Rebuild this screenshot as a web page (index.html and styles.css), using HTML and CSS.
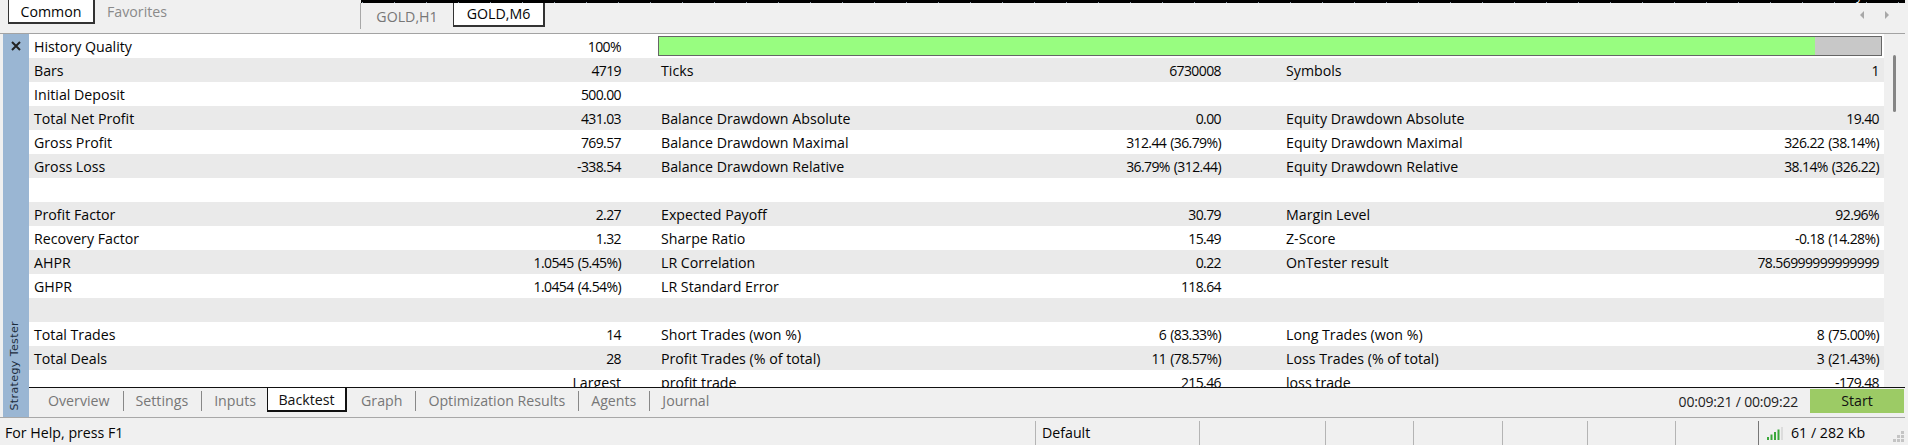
FILE: index.html
```html
<!DOCTYPE html>
<html lang="en">
<head>
    <meta charset="UTF-8">
    <title>Strategy Tester</title>
    <link rel="stylesheet" href="styles.css">
</head>
<body>

<div class="top">
    <div class="side-tabs">
        <div class="tab tab-on">Common</div>
        <div class="tab tab-off">Favorites</div>
    </div>
    <div class="chart-area">
        <div class="chart-strip"><span class="chart-label">7 days</span></div>
        <div class="chart-tabs">
            <div class="chart-tab">GOLD,H1</div>
            <div class="tab-on chart-tab-on">GOLD,M6</div>
            <div class="arrows">
                <svg width="6" height="10" viewBox="0 0 6 10"><path d="M5 1v8L1 5z" fill="#a8a8a8"/></svg>
                <svg width="6" height="10" viewBox="0 0 6 10"><path d="M1 1v8l4-4z" fill="#a8a8a8"/></svg>
            </div>
        </div>
    </div>
</div>

<div class="main">
    <div class="sidebar">
        <svg class="close" width="10" height="10" viewBox="0 0 10 10"><path d="M1 1l8 8M9 1l-8 8" stroke="#222" stroke-width="2"/></svg>
        <div class="sidebar-title">Strategy Tester</div>
    </div>
    <div class="content">
        <div class="report-wrap">
            <div class="report">
                <div class="row">
                    <div class="cell a"><span>History Quality</span><span>100%</span></div>
                    <div class="quality"><div class="quality-fill"></div></div>
                </div>
                <div class="row">
                    <div class="cell a"><span>Bars</span><span>4719</span></div>
                    <div class="cell b"><span>Ticks</span><span>6730008</span></div>
                    <div class="cell c"><span>Symbols</span><span>1</span></div>
                </div>
                <div class="row">
                    <div class="cell a"><span>Initial Deposit</span><span>500.00</span></div>
                </div>
                <div class="row">
                    <div class="cell a"><span>Total Net Profit</span><span>431.03</span></div>
                    <div class="cell b"><span>Balance Drawdown Absolute</span><span>0.00</span></div>
                    <div class="cell c"><span>Equity Drawdown Absolute</span><span>19.40</span></div>
                </div>
                <div class="row">
                    <div class="cell a"><span>Gross Profit</span><span>769.57</span></div>
                    <div class="cell b"><span>Balance Drawdown Maximal</span><span>312.44 (36.79%)</span></div>
                    <div class="cell c"><span>Equity Drawdown Maximal</span><span>326.22 (38.14%)</span></div>
                </div>
                <div class="row">
                    <div class="cell a"><span>Gross Loss</span><span>-338.54</span></div>
                    <div class="cell b"><span>Balance Drawdown Relative</span><span>36.79% (312.44)</span></div>
                    <div class="cell c"><span>Equity Drawdown Relative</span><span>38.14% (326.22)</span></div>
                </div>
                <div class="row"></div>
                <div class="row">
                    <div class="cell a"><span>Profit Factor</span><span>2.27</span></div>
                    <div class="cell b"><span>Expected Payoff</span><span>30.79</span></div>
                    <div class="cell c"><span>Margin Level</span><span>92.96%</span></div>
                </div>
                <div class="row">
                    <div class="cell a"><span>Recovery Factor</span><span>1.32</span></div>
                    <div class="cell b"><span>Sharpe Ratio</span><span>15.49</span></div>
                    <div class="cell c"><span>Z-Score</span><span>-0.18 (14.28%)</span></div>
                </div>
                <div class="row">
                    <div class="cell a"><span>AHPR</span><span>1.0545 (5.45%)</span></div>
                    <div class="cell b"><span>LR Correlation</span><span>0.22</span></div>
                    <div class="cell c"><span>OnTester result</span><span>78.56999999999999</span></div>
                </div>
                <div class="row">
                    <div class="cell a"><span>GHPR</span><span>1.0454 (4.54%)</span></div>
                    <div class="cell b"><span>LR Standard Error</span><span>118.64</span></div>
                </div>
                <div class="row"></div>
                <div class="row">
                    <div class="cell a"><span>Total Trades</span><span>14</span></div>
                    <div class="cell b"><span>Short Trades (won %)</span><span>6 (83.33%)</span></div>
                    <div class="cell c"><span>Long Trades (won %)</span><span>8 (75.00%)</span></div>
                </div>
                <div class="row">
                    <div class="cell a"><span>Total Deals</span><span>28</span></div>
                    <div class="cell b"><span>Profit Trades (% of total)</span><span>11 (78.57%)</span></div>
                    <div class="cell c"><span>Loss Trades (% of total)</span><span>3 (21.43%)</span></div>
                </div>
                <div class="row">
                    <div class="cell a end"><span>Largest</span></div>
                    <div class="cell b"><span>profit trade</span><span>215.46</span></div>
                    <div class="cell c"><span>loss trade</span><span>-179.48</span></div>
                </div>
            </div>
            <div class="scroll"><div class="thumb"></div></div>
        </div>
        <div class="bottom-tabs">
            <div class="btab sep">Overview</div>
            <div class="btab sep">Settings</div>
            <div class="btab tight">Inputs</div>
            <div class="btab-on">Backtest</div>
            <div class="btab sep">Graph</div>
            <div class="btab sep">Optimization Results</div>
            <div class="btab sep">Agents</div>
            <div class="btab">Journal</div>
            <div class="timer">00:09:21 / 00:09:22</div>
            <div class="start">Start</div>
        </div>
    </div>
</div>

<div class="status">
    <div class="status-help">For Help, press F1</div>
    <div class="status-cell w-default">Default</div>
    <div class="status-cell w1"></div>
    <div class="status-cell w2"></div>
    <div class="status-cell w3"></div>
    <div class="status-cell w4"></div>
    <div class="status-cell w5"></div>
    <div class="status-cell w6"></div>
    <div class="status-net">
        <svg width="17" height="13" viewBox="0 0 17 13">
            <rect x="0" y="10" width="2" height="3" fill="#3aa83a"/>
            <rect x="3.5" y="7.5" width="2" height="5.5" fill="#3aa83a"/>
            <rect x="7" y="5" width="2" height="8" fill="#3aa83a"/>
            <rect x="10.5" y="2.5" width="2" height="10.5" fill="#3aa83a"/>
            <rect x="14" y="0" width="2" height="13" fill="#dcdcdc"/>
        </svg>
        <span>61 / 282 Kb</span>
    </div>
    <svg class="grip" width="12" height="12" viewBox="0 0 12 12" fill="#c4c4c4">
        <rect x="8" y="0" width="3" height="3"/>
        <rect x="4" y="4" width="3" height="3"/><rect x="8" y="4" width="3" height="3"/>
        <rect x="0" y="8" width="3" height="3"/><rect x="4" y="8" width="3" height="3"/><rect x="8" y="8" width="3" height="3"/>
    </svg>
</div>

</body>
</html>
```

FILE: styles.css
```css
* {
    box-sizing: border-box;
    margin: 0;
    padding: 0;
}
html, body {
    height: 445px;
    overflow: hidden;
}
body {
    display: flex;
    flex-direction: column;
    width: 1908px;
    padding-right: 3px;
    background: #f0f0f0;
    color: #050505;
    font-family: 'Open Sans', sans-serif;
    font-size: 14.2px;
    line-height: 24px;
}

/* top strip */
.top {
    display: flex;
    height: 34px;
    flex: none;
    border-bottom: 1px solid #a3a3a3;
}
.side-tabs {
    display: flex;
    width: 360px;
    height: 24px;
    padding-left: 8px;
}
.tab {
    width: 87px;
    height: 24px;
    text-align: center;
}
.tab-on {
    background: #fff;
    border: 1px solid #333;
    border-top: none;
    border-right-width: 2px;
    border-bottom-width: 2px;
}
.tab-off {
    width: 84px;
    color: #8a8a8a;
}
.chart-area {
    flex: 1;
    min-width: 0;
}
.chart-strip {
    position: relative;
    height: 3px;
    overflow: hidden;
    margin-left: 1px;
    background: repeating-linear-gradient(90deg, #000 0, #000 1px, #8a9aa8 1px, #8a9aa8 2px, #000 2px, #000 32px) 0 2px / 100% 1px no-repeat, #000;
}
.chart-label {
    position: absolute;
    right: 37px;
    top: -10px;
    color: #fff;
    font-size: 12px;
    line-height: 12px;
}
.chart-tabs {
    display: flex;
    height: 26px;
    border-left: 1px solid #a8a8a8;
}
.chart-tab {
    width: 92px;
    padding-top: 2px;
    text-align: center;
    color: #777;
}
.chart-tab-on {
    width: 92px;
    height: 24px;
    text-align: center;
    line-height: 22px;
}
.arrows {
    display: flex;
    gap: 19px;
    margin-left: auto;
    padding: 7px 15px 0 0;
}

/* main panel */
.main {
    display: flex;
    height: 384px;
    flex: none;
    padding-left: 3px;
    border-bottom: 1px solid #a8a8a8;
}
.sidebar {
    position: relative;
    width: 26px;
    flex: none;
    background: #9ab6d3;
}
.close {
    position: absolute;
    left: 8px;
    top: 7px;
}
.sidebar-title {
    position: absolute;
    left: 2px;
    bottom: 6px;
    writing-mode: vertical-rl;
    transform: rotate(180deg);
    font-family: 'DejaVu Sans', sans-serif;
    font-size: 11px;
    letter-spacing: 0.4px;
    line-height: 20px;
    color: #1c2c3c;
}
.content {
    flex: 1;
    min-width: 0;
    display: flex;
    flex-direction: column;
}
.report-wrap {
    display: flex;
    height: 353px;
    flex: none;
    overflow: hidden;
}
.report {
    width: 1855px;
    flex: none;
}
.row {
    display: grid;
    grid-template-columns: 632px 625px 1fr;
    height: 24px;
    background: #fff;
}
.row:nth-child(even) {
    background: #eaeaea;
}
.cell {
    display: flex;
    justify-content: space-between;
    white-space: nowrap;
    line-height: 25px;
}
.cell span + span {
    font-size: 14px;
    letter-spacing: -0.6px;
    word-spacing: 1px;
}
.cell.a {
    padding: 0 40px 0 5px;
}
.cell.b {
    grid-column: 2;
    padding-right: 65px;
}
.cell.c {
    grid-column: 3;
    padding-right: 5px;
}
.cell.end {
    justify-content: flex-end;
}
.quality {
    grid-column: 2 / 4;
    height: 20px;
    margin: 2px 2px 0 -3px;
    border: 1px solid #666;
    background: #c8c8c8;
}
.quality-fill {
    width: 94.6%;
    height: 100%;
    background: #98fd80;
}
.scroll {
    flex: 1;
    position: relative;
}
.thumb {
    position: absolute;
    left: 9px;
    top: 21px;
    width: 3px;
    height: 57px;
    border-radius: 2px;
    background: #858585;
}

/* tabs under the report */
.bottom-tabs {
    display: flex;
    align-items: flex-start;
    flex: 1;
    border-top: 1px solid #111;
    padding-left: 19px;
    color: #777;
}
.btab {
    height: 20px;
    margin-top: 3px;
    padding-right: 13px;
    line-height: 20px;
}
.btab.sep {
    margin-right: 12px;
    border-right: 1px solid #888;
}
.btab.tight {
    padding-right: 11px;
}
.btab-on {
    width: 80px;
    height: 25px;
    margin: -1px 14px 0 0;
    background: #fff;
    border: 1px solid #111;
    border-right-width: 2px;
    border-bottom-width: 2px;
    color: #111;
    text-align: center;
}
.timer {
    margin-left: auto;
    margin-top: 2px;
    font-size: 14px;
    letter-spacing: -0.2px;
    color: #222;
}
.start {
    width: 94px;
    height: 24px;
    margin: 1px 1px 0 12px;
    background: #9ccb65;
    color: #111;
    text-align: center;
}

/* status bar */
.status {
    position: relative;
    display: flex;
    flex: 1;
    align-items: stretch;
    padding-top: 3px;
    line-height: 24px;
}
.status-help {
    width: 1035px;
    padding-left: 5px;
}
.status-cell {
    border-left: 1px solid #b4b4b4;
}
.w-default {
    width: 164px;
    padding-left: 6px;
}
.w1 { width: 126px; }
.w2 { width: 88px; }
.w3 { width: 89px; }
.w4 { width: 85px; }
.w5 { width: 88px; }
.w6 { width: 83px; }
.status-net {
    display: flex;
    align-items: center;
    gap: 7px;
    padding-left: 8px;
    border-left: 1px solid #777;
}
.grip {
    position: absolute;
    right: 0;
    bottom: 2px;
}
```
